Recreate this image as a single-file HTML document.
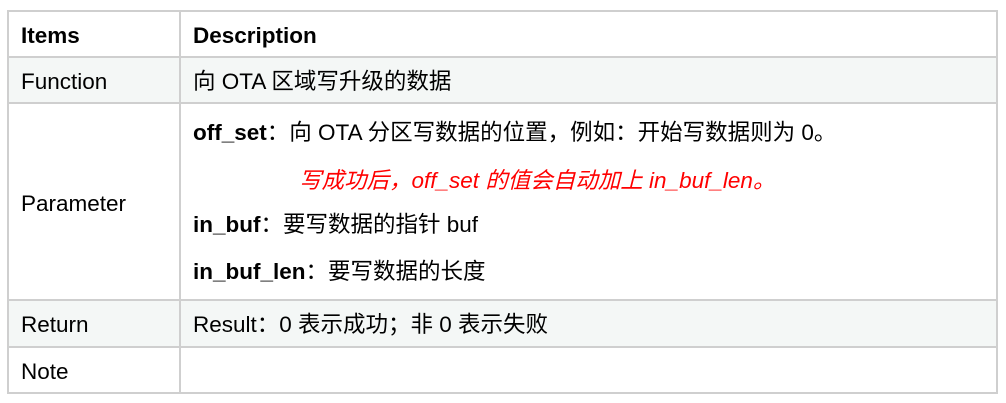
<!DOCTYPE html>
<html><head><meta charset="utf-8"><style>
body{margin:0;width:1006px;height:403px;background:#fff;position:relative;font-family:"Liberation Sans","Noto Sans CJK SC",sans-serif;font-size:22.5px;color:#000;overflow:hidden}
.b{position:absolute;background:#cfcfcf}
.bg{position:absolute;background:#f4f7f6}
.t{position:absolute;white-space:nowrap;line-height:24px}
b{font-weight:bold}
.r{color:#f00;font-style:italic}
</style></head><body>
<div class="bg" style="left:8px;top:58px;width:990px;height:45px"></div>
<div class="bg" style="left:8px;top:301px;width:990px;height:46px"></div>
<div class="b" style="left:7px;top:10px;width:991px;height:2px"></div>
<div class="b" style="left:7px;top:56px;width:991px;height:2px"></div>
<div class="b" style="left:7px;top:102px;width:991px;height:2px"></div>
<div class="b" style="left:7px;top:299px;width:991px;height:2px"></div>
<div class="b" style="left:7px;top:346px;width:991px;height:2px"></div>
<div class="b" style="left:7px;top:392px;width:991px;height:2px"></div>
<div class="b" style="left:7px;top:10px;width:2px;height:384px"></div>
<div class="b" style="left:179px;top:10px;width:2px;height:384px"></div>
<div class="b" style="left:996px;top:10px;width:2px;height:384px"></div>
<div class="t" style="left:21px;top:24px"><b>Items</b></div>
<div class="t" style="left:193px;top:24px"><b>Description</b></div>
<div class="t" style="left:21px;top:70px">Function</div>
<div class="t" style="left:193px;top:70px">向 OTA 区域写升级的数据</div>
<div class="t" style="left:21px;top:192px">Parameter</div>
<div class="t" style="left:193px;top:121px"><b>off_set</b>：向 OTA 分区写数据的位置，例如：开始写数据则为 0。</div>
<div class="t r" style="left:299px;top:169px">写成功后，off_set 的值会自动加上 in_buf_len。</div>
<div class="t" style="left:193px;top:213px"><b>in_buf</b>：要写数据的指针 buf</div>
<div class="t" style="left:193px;top:260px"><b>in_buf_len</b>：要写数据的长度</div>
<div class="t" style="left:21px;top:313px">Return</div>
<div class="t" style="left:193px;top:313px">Result：0 表示成功；非 0 表示失败</div>
<div class="t" style="left:21px;top:360px">Note</div>
</body></html>
